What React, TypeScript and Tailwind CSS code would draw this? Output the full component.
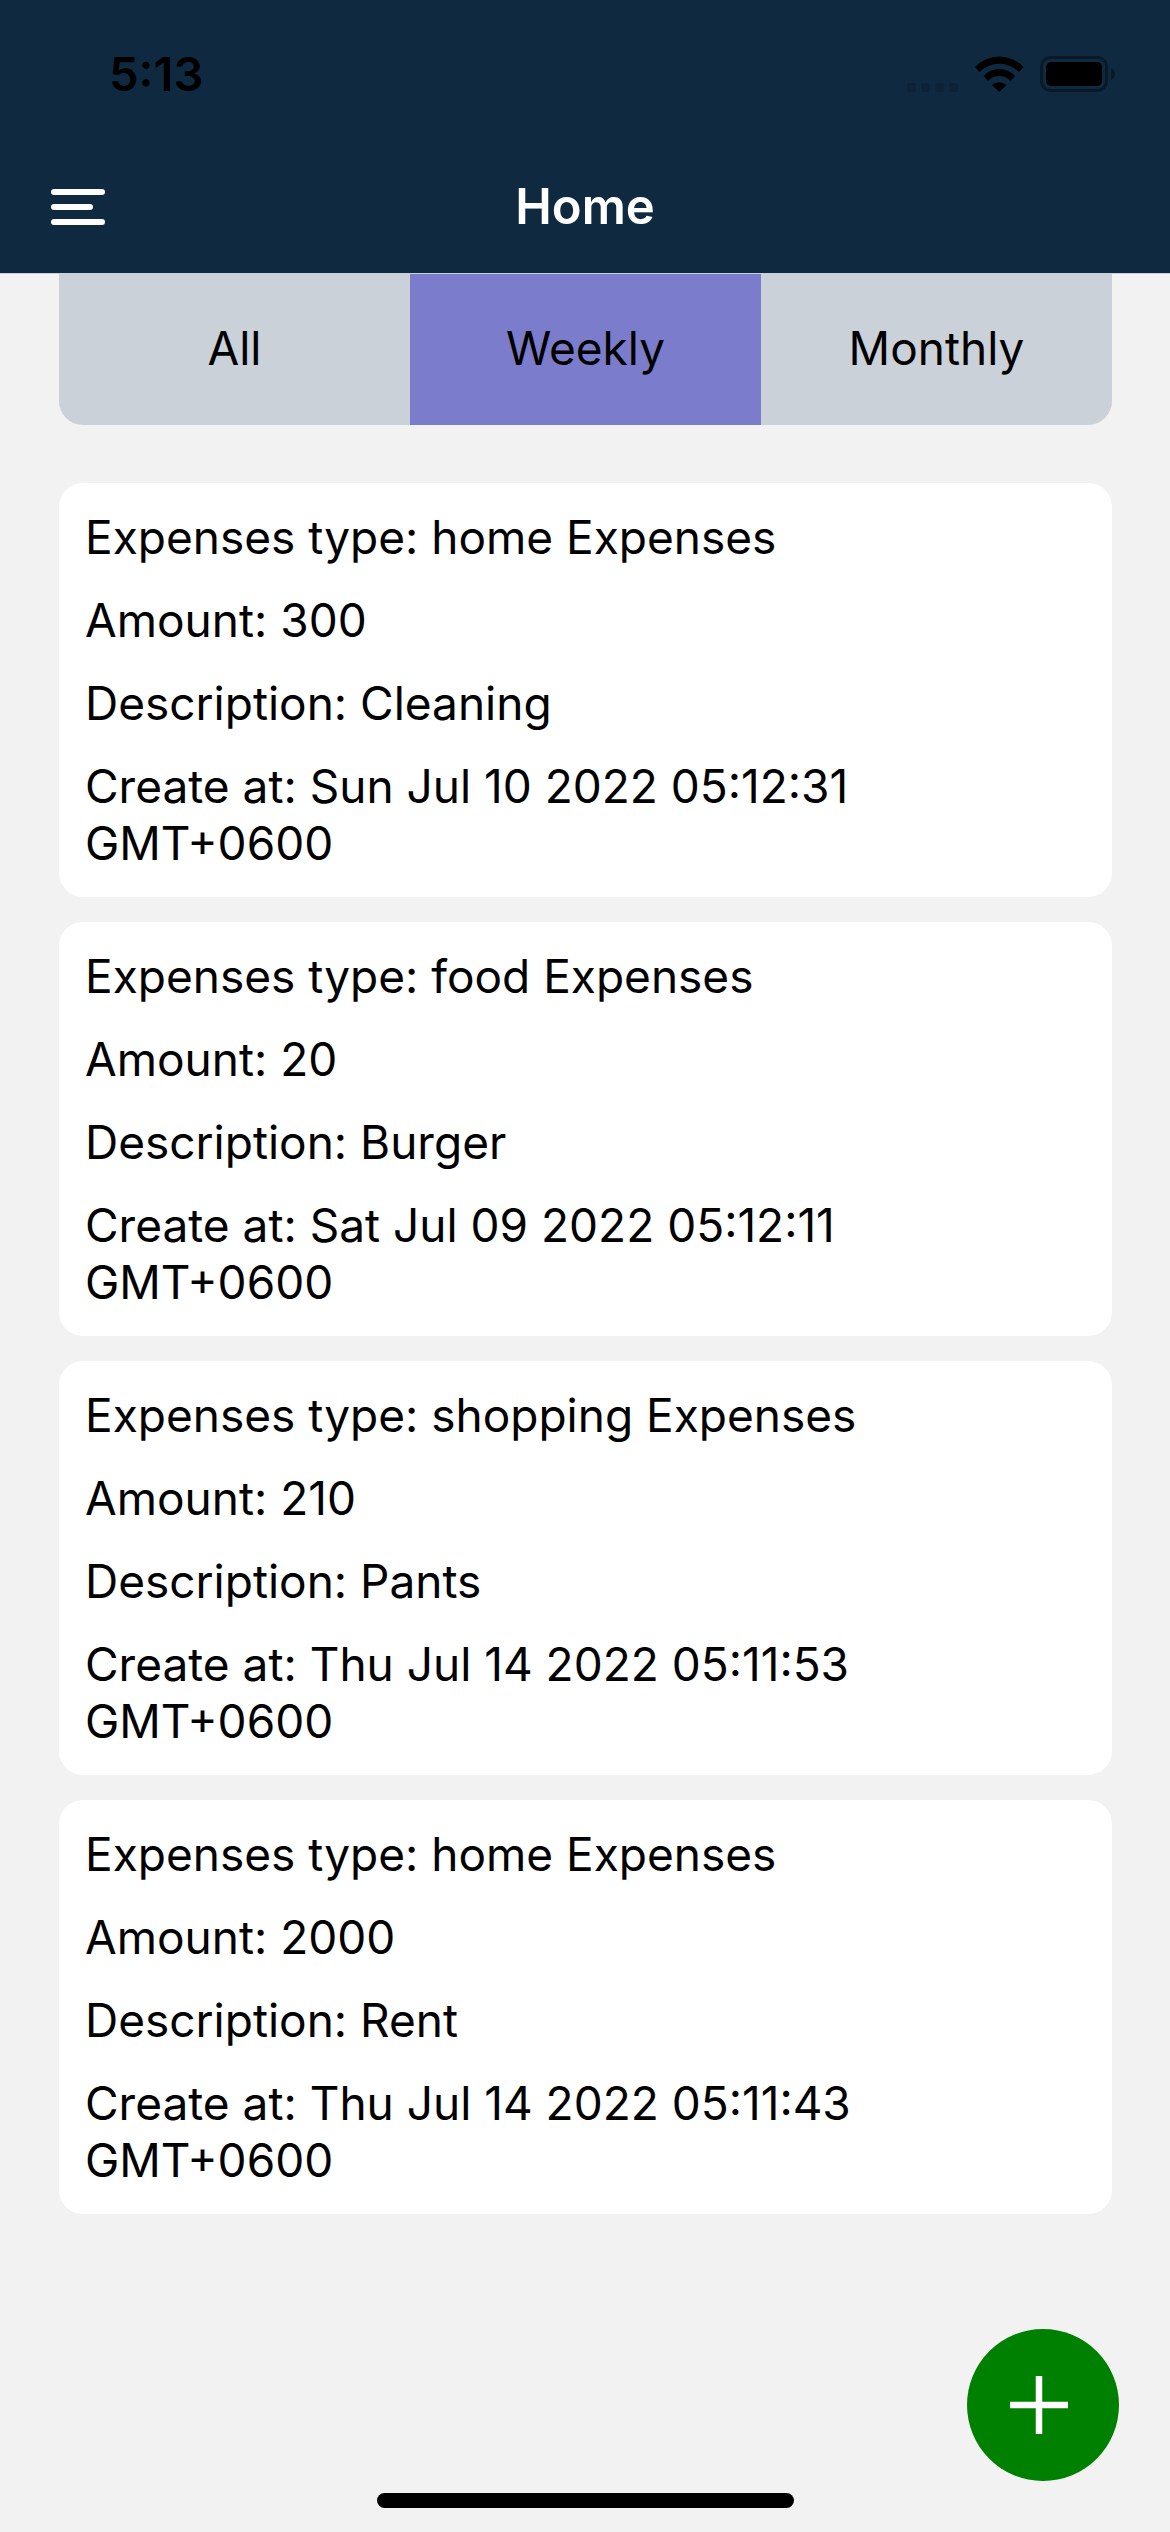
import React from "react";

const tabs = ["All", "Weekly", "Monthly"];
const expenses = [
  { type: "home Expenses", amount: 300, description: "Cleaning", created: "Sun Jul 10 2022 05:12:31 GMT+0600" },
  { type: "food Expenses", amount: 20, description: "Burger", created: "Sat Jul 09 2022 05:12:11 GMT+0600" },
  { type: "shopping Expenses", amount: 210, description: "Pants", created: "Thu Jul 14 2022 05:11:53 GMT+0600" },
  { type: "home Expenses", amount: 2000, description: "Rent", created: "Thu Jul 14 2022 05:11:43 GMT+0600" },
];

function StatusBar() {
  return (
    <div className="flex h-[148px] items-center justify-between pr-[54px] pl-[109px]">
      <span className="text-[47px] leading-[56px] font-semibold text-black">5:13</span>
      <div className="flex items-center gap-4">
        <svg width="52" height="36" viewBox="0 0 52 36" fill="#0c2237">
          <rect x="0" y="27" width="9" height="9" rx="3" />
          <rect x="14" y="27" width="9" height="9" rx="3" />
          <rect x="28" y="27" width="9" height="9" rx="3" />
          <rect x="42" y="27" width="9" height="9" rx="3" />
        </svg>
        <svg width="49" height="36" viewBox="0 0 49 36">
          <path d="M0 11A33 33 0 0 1 48.500 11L44 16A28 28 0 0 0 4.500 16Z" />
          <path d="M8.500 20A21 21 0 0 1 40 20L35.500 25A15 15 0 0 0 13 25Z" />
          <path d="M17 29A11 11 0 0 1 31.500 29L24.250 36Z" />
        </svg>
        <svg width="76" height="36" viewBox="0 0 76 36">
          <rect x="1.500" y="1.500" width="65" height="33" rx="9" fill="none" stroke="#081a26" strokeWidth="3" />
          <rect x="6" y="6" width="56" height="24" rx="5" />
          <path d="M71 12Q75 14 75 18T71 24Z" fill="#081a26" />
        </svg>
      </div>
    </div>
  );
}

export default function App() {
  return (
    <div className="flex min-h-screen flex-col bg-[#f2f2f2] font-['Inter',sans-serif] text-black">
      <header className="border-b border-[#c9d0d8] bg-[#0f2a40]">
        <StatusBar />
        <div className="grid grid-cols-3 items-center px-[51px] pt-[29px] pb-9">
          <button aria-label="Open menu" className="w-fit">
            <svg width="54" height="36" viewBox="0 0 54 36" stroke="#fff" strokeWidth="6" strokeLinecap="round">
              <path d="M3 3h48M3 18h36M3 33h48" />
            </svg>
          </button>
          <h1 className="text-center text-[49px] leading-[60px] font-semibold text-white">Home</h1>
        </div>
      </header>
      <main className="flex-1 pr-[58px] pl-[59px]">
        <div className="grid h-[151px] grid-cols-3 overflow-hidden rounded-b-3xl bg-[#cad1d9] text-[46px]">
          {tabs.map((t) => (
            <button key={t} className={t === "Weekly" ? "bg-[#7c7ccd] pb-0.5" : "pb-0.5"}>{t}</button>
          ))}
        </div>
        <div className="mt-[58px] flex flex-col gap-[25px]">
          {expenses.map((e, i) => (
            <article key={i} className="flex flex-col gap-[26px] rounded-3xl bg-white px-[26px] pt-[26px] pb-[25px] text-[46px] leading-[57px]">
              <p>Expenses type: {e.type}</p>
              <p>Amount: {e.amount}</p>
              <p>Description: {e.description}</p>
              <p>Create at: {e.created}</p>
            </article>
          ))}
        </div>
      </main>
      <footer className="flex flex-col items-center">
        <button aria-label="Add expense" className="mr-[51px] grid size-[152px] place-items-center self-end rounded-full bg-[#008000] pr-2">
          <svg width="58" height="58" viewBox="0 0 58 58" stroke="#fff" strokeWidth="6.500">
            <path d="M29 0v58M0 29h58" />
          </svg>
        </button>
        <div className="mt-3 mb-6 h-[15px] w-[417px] rounded-full bg-black" />
      </footer>
    </div>
  );
}
